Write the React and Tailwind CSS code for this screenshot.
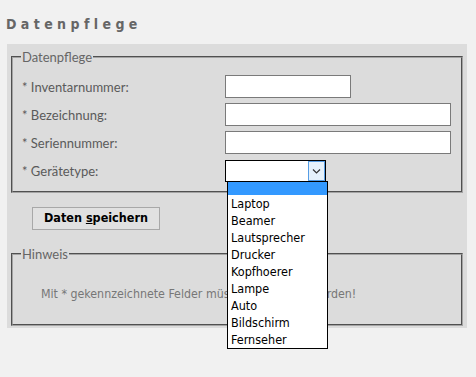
const fields = [
  { label: 'Inventarnummer', width: 'w-[126px]' },
  { label: 'Bezeichnung', width: 'w-[226px]' },
  { label: 'Seriennummer', width: 'w-[226px]' },
]

const types = ['Laptop', 'Beamer', 'Lautsprecher', 'Drucker', 'Kopfhoerer', 'Lampe', 'Auto', 'Bildschirm', 'Fernseher']

const groove = 'border-2 [border-style:groove] border-[#a4a4a4]'
const label = "font-['Lato',sans-serif] text-[13px] leading-[16px] text-[#5a5a5a]"
const tahoma = "font-['DejaVu_Sans_Condensed','DejaVu_Sans',sans-serif]"

function Row({ text, children }) {
  return (
    <div className="flex h-[23px] items-center">
      <div className={`w-[204px] pl-[1px] ${label}`}>* {text}:</div>
      {children}
    </div>
  )
}

export default function App() {
  return (
    <div className="min-h-screen bg-[#f1f1f1] pt-[16px]">
      <h1 className={`pl-[6px] text-[14px] font-bold leading-[17px] tracking-[4.4px] text-[#666] ${tahoma}`}>
        Datenpflege
      </h1>

      <div className="relative ml-[7px] mt-[11px] w-[460px] bg-[#dcdcdc] px-[4px] pb-[2px] pt-[5px]">
        <fieldset className={`${groove} pb-[9px] pl-[8px]`}>
          <legend className={`px-[1px] ${label} text-[#666]`}>Datenpflege</legend>
          <div className="mt-[10px] flex flex-col gap-[5px]">
            {fields.map((f) => (
              <Row key={f.label} text={f.label}>
                <div className={`h-[23px] ${f.width} border border-[#7a7a7a] bg-white`} />
              </Row>
            ))}
            <Row text="Gerätetype">
              <div className="flex h-[22px] w-[101px] border border-black bg-white">
                <div className="flex-1" />
                <div className="flex w-[17px] items-center justify-center border border-[#569de5] bg-[#e5f1fb]">
                  <svg width="9" height="6" viewBox="0 0 9 6" fill="none" stroke="#333" strokeWidth="1.2">
                    <path d="M1 1.5 L4.5 5 L8 1.5" />
                  </svg>
                </div>
              </div>
            </Row>
          </div>
        </fieldset>

        <button
          type="button"
          className={`ml-[21px] mt-[14px] h-[23px] w-[128px] border border-[#a8a8a8] bg-[#e1e1e1] text-[12.5px] font-bold text-black ${tahoma}`}
        >
          Daten <span className="underline">s</span>peichern
        </button>

        <fieldset className={`${groove} mt-[16px] pb-[22px] pl-[8px]`}>
          <legend className={`px-[1px] ${label} text-[#666]`}>Hinweis</legend>
          <p className={`mt-[24px] pl-[20px] text-[12.3px] leading-[16px] text-[#777] ${tahoma}`}>
            Mit * gekennzeichnete Felder müssen ausgefüllt werden!
          </p>
        </fieldset>

        <ul className={`absolute left-[220px] top-[137px] w-[101px] border border-black bg-white text-[12.5px] text-black ${tahoma}`}>
          <li className="h-[13px] bg-[#3399ff]" />
          {types.map((t) => (
            <li key={t} className="h-[17px] pl-[3px] leading-[17px]">
              {t}
            </li>
          ))}
        </ul>
      </div>
    </div>
  )
}
